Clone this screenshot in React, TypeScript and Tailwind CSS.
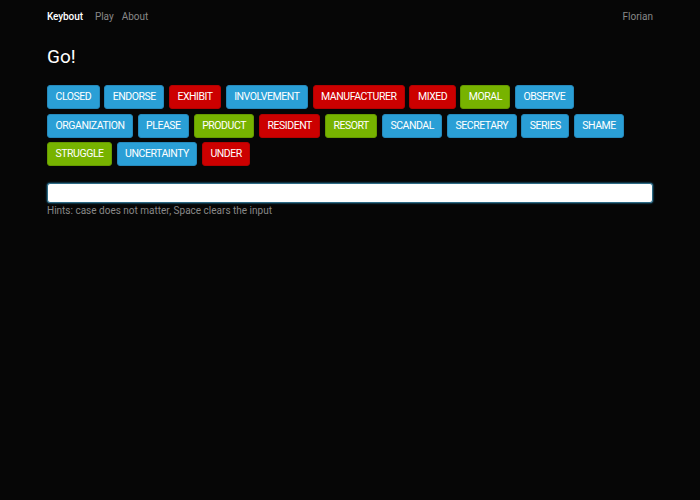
import React from "react";

type W = { t: string; c: "b" | "r" | "g" };
const words: W[] = [
  { t: "CLOSED", c: "b" },
  { t: "ENDORSE", c: "b" },
  { t: "EXHIBIT", c: "r" },
  { t: "INVOLVEMENT", c: "b" },
  { t: "MANUFACTURER", c: "r" },
  { t: "MIXED", c: "r" },
  { t: "MORAL", c: "g" },
  { t: "OBSERVE", c: "b" },
  { t: "ORGANIZATION", c: "b" },
  { t: "PLEASE", c: "b" },
  { t: "PRODUCT", c: "g" },
  { t: "RESIDENT", c: "r" },
  { t: "RESORT", c: "g" },
  { t: "SCANDAL", c: "b" },
  { t: "SECRETARY", c: "b" },
  { t: "SERIES", c: "b" },
  { t: "SHAME", c: "b" },
  { t: "STRUGGLE", c: "g" },
  { t: "UNCERTAINTY", c: "b" },
  { t: "UNDER", c: "r" },
];

const cls = {
  b: "bg-[#2a9fd6] border-[#2589bb]",
  r: "bg-[#cc0000] border-[#b30000]",
  g: "bg-[#77b300] border-[#669a00]",
};

export default function App() {
  return (
    <div
      className="min-h-[500px] w-full bg-[#060606] px-[47px]"
      style={{ fontFamily: "Roboto, 'Liberation Sans', sans-serif" }}
    >
      <nav className="flex h-[33px] items-center justify-between text-[10px]">
        <div className="flex items-center">
          <span className="font-medium tracking-[-0.1px] text-white">Keybout</span>
          <span className="ml-[12px] text-[#888]">Play</span>
          <span className="ml-[8px] text-[#888]">About</span>
        </div>
        <span className="text-[#888]">Florian</span>
      </nav>
      <h1 className="mt-[12px] text-[19px] leading-[24px] text-white">Go!</h1>
      <div className="mt-[16px] flex flex-wrap gap-x-[4.5px] gap-y-[4.5px]">
        {words.map((w) => (
          <span
            key={w.t}
            className={`flex h-[24px] items-center rounded-[3px] border px-[7.5px] text-[10.5px] tracking-[-0.45px] text-white ${cls[w.c]}`}
          >
            {w.t}
          </span>
        ))}
      </div>
      <div className="mt-[17px] h-[20px] w-full rounded-[3px] border border-[#2d6a85] bg-white shadow-[0_0_2px_#2a9fd6]" />
      <div className="mt-[1px] text-[10px] leading-[14px] text-[#888]">
        Hints: case does not matter, Space clears the input
      </div>
    </div>
  );
}
